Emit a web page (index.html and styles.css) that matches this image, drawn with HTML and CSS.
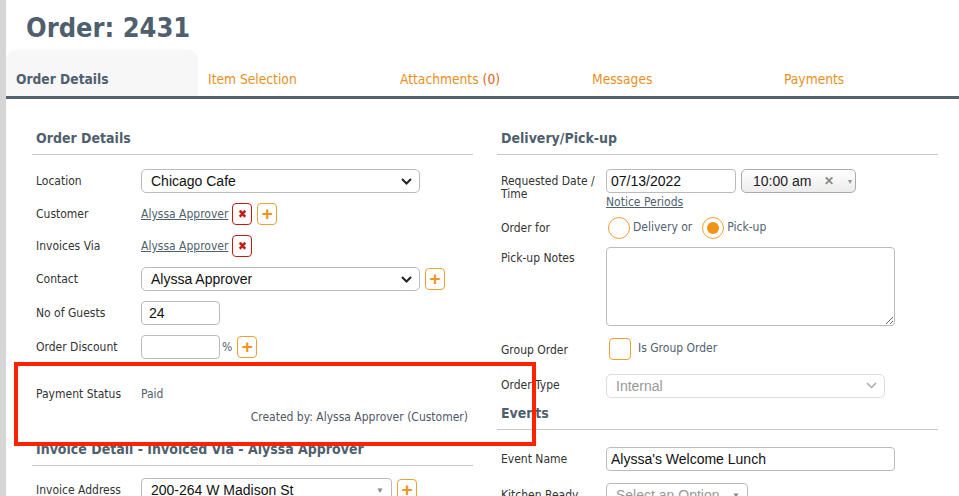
FILE: index.html
```html
<!DOCTYPE html>
<html>
<head>
    <meta charset="UTF-8">
    <title>Order: 2431</title>
    <link rel="stylesheet" href="styles.css">
</head>
<body>
    <div class="page">
        <h1 class="title">Order: 2431</h1>

        <div class="tabs">
            <div class="tab active">Order Details</div>
            <div class="tab">Item Selection</div>
            <div class="tab">Attachments <span class="count">(0)</span></div>
            <div class="tab">Messages</div>
            <div class="tab">Payments</div>
        </div>

        <div class="columns">
            <!-- Левая колонка -->
            <div class="col">
                <h2 class="section">Order Details</h2>

                <div class="row">
                    <div class="label">Location</div>
                    <div class="select wide"><span>Chicago Cafe</span>
                        <svg width="11" height="7" viewBox="0 0 11 7"><polyline points="1,1 5.5,5.5 10,1" fill="none" stroke="#222" stroke-width="2"/></svg>
                    </div>
                </div>

                <div class="row small">
                    <div class="label">Customer</div>
                    <a class="link">Alyssa Approver</a>
                    <span class="icon-btn remove">&#x2716;</span>
                    <span class="icon-btn add">+</span>
                </div>

                <div class="row small">
                    <div class="label">Invoices Via</div>
                    <a class="link">Alyssa Approver</a>
                    <span class="icon-btn remove">&#x2716;</span>
                </div>

                <div class="row">
                    <div class="label">Contact</div>
                    <div class="select wide"><span>Alyssa Approver</span>
                        <svg width="11" height="7" viewBox="0 0 11 7"><polyline points="1,1 5.5,5.5 10,1" fill="none" stroke="#222" stroke-width="2"/></svg>
                    </div>
                    <span class="icon-btn add">+</span>
                </div>

                <div class="row">
                    <div class="label">No of Guests</div>
                    <input class="input short" type="text" value="24">
                </div>

                <div class="row">
                    <div class="label">Order Discount</div>
                    <input class="input short" type="text" value="">
                    <span class="percent">%</span>
                    <span class="icon-btn add">+</span>
                </div>

                <div class="row small status">
                    <div class="label">Payment Status</div>
                    <span class="value">Paid</span>
                </div>

                <div class="created">Created by: Alyssa Approver (Customer)</div>

                <h2 class="section invoice">Invoice Detail - Invoiced Via - Alyssa Approver</h2>

                <div class="row">
                    <div class="label">Invoice Address</div>
                    <div class="select s2 address"><span>200-264 W Madison St</span><span class="arrow">&#9660;</span></div>
                    <span class="icon-btn add">+</span>
                </div>
            </div>

            <!-- Правая колонка -->
            <div class="col">
                <h2 class="section">Delivery/Pick-up</h2>

                <div class="row top requested">
                    <div class="label two-line">Requested Date / Time</div>
                    <div class="field">
                        <div class="inline">
                            <input class="input date" type="text" value="07/13/2022">
                            <div class="time"><span>10:00 am</span><span class="clear">&#x2715;</span><span class="arrow">&#9660;</span></div>
                        </div>
                        <a class="link notice">Notice Periods</a>
                    </div>
                </div>

                <div class="row small order-for">
                    <div class="label">Order for</div>
                    <span class="radio"></span><span class="opt">Delivery or</span>
                    <span class="radio checked"></span><span class="opt">Pick-up</span>
                </div>

                <div class="row top notes">
                    <div class="label">Pick-up Notes</div>
                    <textarea class="textarea"></textarea>
                </div>

                <div class="row group">
                    <div class="label">Group Order</div>
                    <span class="checkbox"></span><span class="opt">Is Group Order</span>
                </div>

                <div class="row order-type">
                    <div class="label">Order Type</div>
                    <div class="select wide disabled"><span>Internal</span>
                        <svg width="11" height="7" viewBox="0 0 11 7"><polyline points="1,1 5.5,5.5 10,1" fill="none" stroke="#aaa" stroke-width="1.5"/></svg>
                    </div>
                </div>

                <h2 class="section events">Events</h2>

                <div class="row">
                    <div class="label">Event Name</div>
                    <input class="input long" type="text" value="Alyssa's Welcome Lunch">
                </div>

                <div class="row kitchen">
                    <div class="label">Kitchen Ready</div>
                    <div class="select s2 option"><span>Select an Option</span><span class="arrow">&#9660;</span></div>
                </div>
            </div>
        </div>
    </div>

    <div class="highlight"></div>
</body>
</html>
```

FILE: styles.css
```css
body {
    margin: 0;
    background: #d6d6d6;
    padding-left: 6px;
    font-family: "DejaVu Sans Condensed", "DejaVu Sans", sans-serif;
    color: #333;
    height: 496px;
    overflow: hidden;
}

.page {
    background: #fff;
    min-height: 496px;
}

.title {
    margin: 0;
    padding: 12px 0 0 20px;
    height: 50px;
    box-sizing: border-box;
    font-size: 27px;
    line-height: 32px;
    font-weight: bold;
    color: #4f5f6e;
}

/* Вкладки */
.tabs {
    display: flex;
    height: 49px;
    border-bottom: 3px solid #536470;
    box-sizing: border-box;
}

.tab {
    width: 192px;
    flex: none;
    padding-left: 10px;
    box-sizing: border-box;
    display: flex;
    align-items: center;
    font-size: 13.7px;
    color: #e8901c;
    padding-top: 12px;
}

.tab.active {
    background: #f7f7f7;
    border-radius: 10px 10px 0 0;
    color: #4f5f6e;
    font-weight: bold;
}

.tab .count {
    color: #e0651a;
    margin-left: 4px;
}

/* Колонки */
.columns {
    display: flex;
    gap: 24px;
    padding: 0 21px 0 26px;
}

.col {
    width: 441px;
    flex: none;
}

.section {
    margin: 29px 0 14px;
    padding: 0 0 6px 4px;
    border-bottom: 1px solid #c8c8c8;
    font-size: 14px;
    line-height: 20px;
    font-weight: bold;
    color: #4f5f6e;
}

.row {
    display: flex;
    align-items: center;
    height: 24px;
    margin-bottom: 10px;
    font-size: 12px;
}

.row.small {
    height: 22px;
}

.row.top {
    align-items: flex-start;
    height: auto;
}

.label {
    width: 109px;
    flex: none;
    padding-left: 4px;
    box-sizing: border-box;
    color: #333;
    line-height: 13px;
}

.two-line {
    padding-top: 6px;
    padding-right: 2px;
}

.link {
    color: #4f5f6e;
    text-decoration: underline;
    font-size: 12px;
}

.value {
    color: #4f5f6e;
}

.select {
    height: 24px;
    box-sizing: border-box;
    border: 1px solid #bbb;
    border-radius: 5px;
    display: flex;
    align-items: center;
    justify-content: space-between;
    padding: 0 7px 0 9px;
    font-family: "Liberation Sans", Arial, sans-serif;
    font-size: 14px;
    color: #111;
    background: #fff;
}

.select.wide {
    width: 279px;
}

.select.disabled {
    color: #999;
    border-color: #ddd;
}

.select.s2 .arrow {
    font-size: 8px;
    color: #888;
}

.select.address {
    width: 251px;
    border-radius: 4px;
}

.select.option {
    width: 142px;
    color: #999;
    border-radius: 4px;
}

.input {
    height: 24px;
    box-sizing: border-box;
    border: 1px solid #bbb;
    border-radius: 4px;
    padding: 0 7px;
    font-family: "Liberation Sans", Arial, sans-serif;
    font-size: 14px;
    color: #111;
    outline: none;
    margin: 0;
}

.input.short {
    width: 79px;
}

.input.date {
    width: 130px;
    padding-left: 4px;
}

.input.long {
    width: 289px;
    padding-left: 4px;
}

.percent {
    margin-left: 2px;
    color: #4f5f6e;
}

.icon-btn {
    width: 20px;
    height: 22px;
    box-sizing: border-box;
    border-radius: 4px;
    display: inline-flex;
    align-items: center;
    justify-content: center;
    flex: none;
    margin-left: 5px;
}

.icon-btn.remove {
    border: 1.5px solid #c81818;
    color: #c81818;
    font-size: 12px;
    margin-left: 4px;
}

.icon-btn.add {
    border: 1.5px solid #f0a030;
    color: #f0951a;
    font-family: "Liberation Sans", Arial, sans-serif;
    font-size: 19px;
    font-weight: bold;
    padding-bottom: 1px;
}

.row.status {
    margin: 24px 0 5px;
}

.created {
    text-align: right;
    padding-right: 5px;
    font-size: 12px;
    line-height: 14px;
    color: #4f5866;
}

.section.invoice {
    margin-top: 15px;
    margin-bottom: 12px;
}

/* Правая колонка */
.field {
    display: flex;
    flex-direction: column;
}

.inline {
    display: flex;
    gap: 5px;
}

.time {
    width: 115px;
    height: 24px;
    box-sizing: border-box;
    border: 1px solid #aaa;
    border-radius: 5px;
    background: linear-gradient(#fff, #ececec);
    display: flex;
    align-items: center;
    padding-left: 11px;
    font-family: "Liberation Sans", Arial, sans-serif;
    font-size: 14px;
    color: #222;
}

.time .clear {
    margin-left: 13px;
    color: #888;
    font-size: 12px;
    font-weight: bold;
}

.time .arrow {
    margin-left: 12px;
    color: #999;
    font-size: 7px;
}

.notice {
    margin-top: 2px;
    line-height: 14px;
}

.row.requested {
    margin-bottom: 8px;
}

.radio {
    width: 22px;
    height: 22px;
    box-sizing: border-box;
    border: 1.5px solid #f0a030;
    border-radius: 50%;
    margin-left: 2px;
    display: inline-flex;
    align-items: center;
    justify-content: center;
    flex: none;
}

.radio.checked::after {
    content: "";
    width: 12px;
    height: 12px;
    border-radius: 50%;
    background: #f0951a;
}

.opt {
    margin: 0 4px 0 3px;
    color: #4f5f6e;
    padding-bottom: 2px;
}

.radio.checked {
    margin-left: 6px;
}

.row.notes {
    height: 79px;
    margin-top: -2px;
}

.row.notes .label {
    padding-top: 5px;
}

.textarea {
    width: 289px;
    height: 79px;
    box-sizing: border-box;
    border: 1px solid #bbb;
    border-radius: 4px;
    margin: 0;
    resize: vertical;
}

.row.group {
    margin-top: 12px;
    height: 22px;
}

.row.group .label {
    padding-top: 3px;
}

.checkbox {
    width: 22px;
    height: 22px;
    box-sizing: border-box;
    border: 1.5px solid #f0a030;
    border-radius: 4px;
    margin-left: 3px;
    flex: none;
}

.row.group .opt {
    margin-left: 7px;
}

.row.order-type {
    margin-top: 14px;
    margin-bottom: 6px;
    height: 23px;
}

.section.events {
    margin-top: 0;
    margin-bottom: 17px;
}

.row.kitchen {
    margin-top: 12px;
}

/* Красная рамка поверх формы */
.highlight {
    position: absolute;
    left: 14px;
    top: 362px;
    width: 522px;
    height: 84px;
    box-sizing: border-box;
    border: 4px solid #ff2200;
}
```
